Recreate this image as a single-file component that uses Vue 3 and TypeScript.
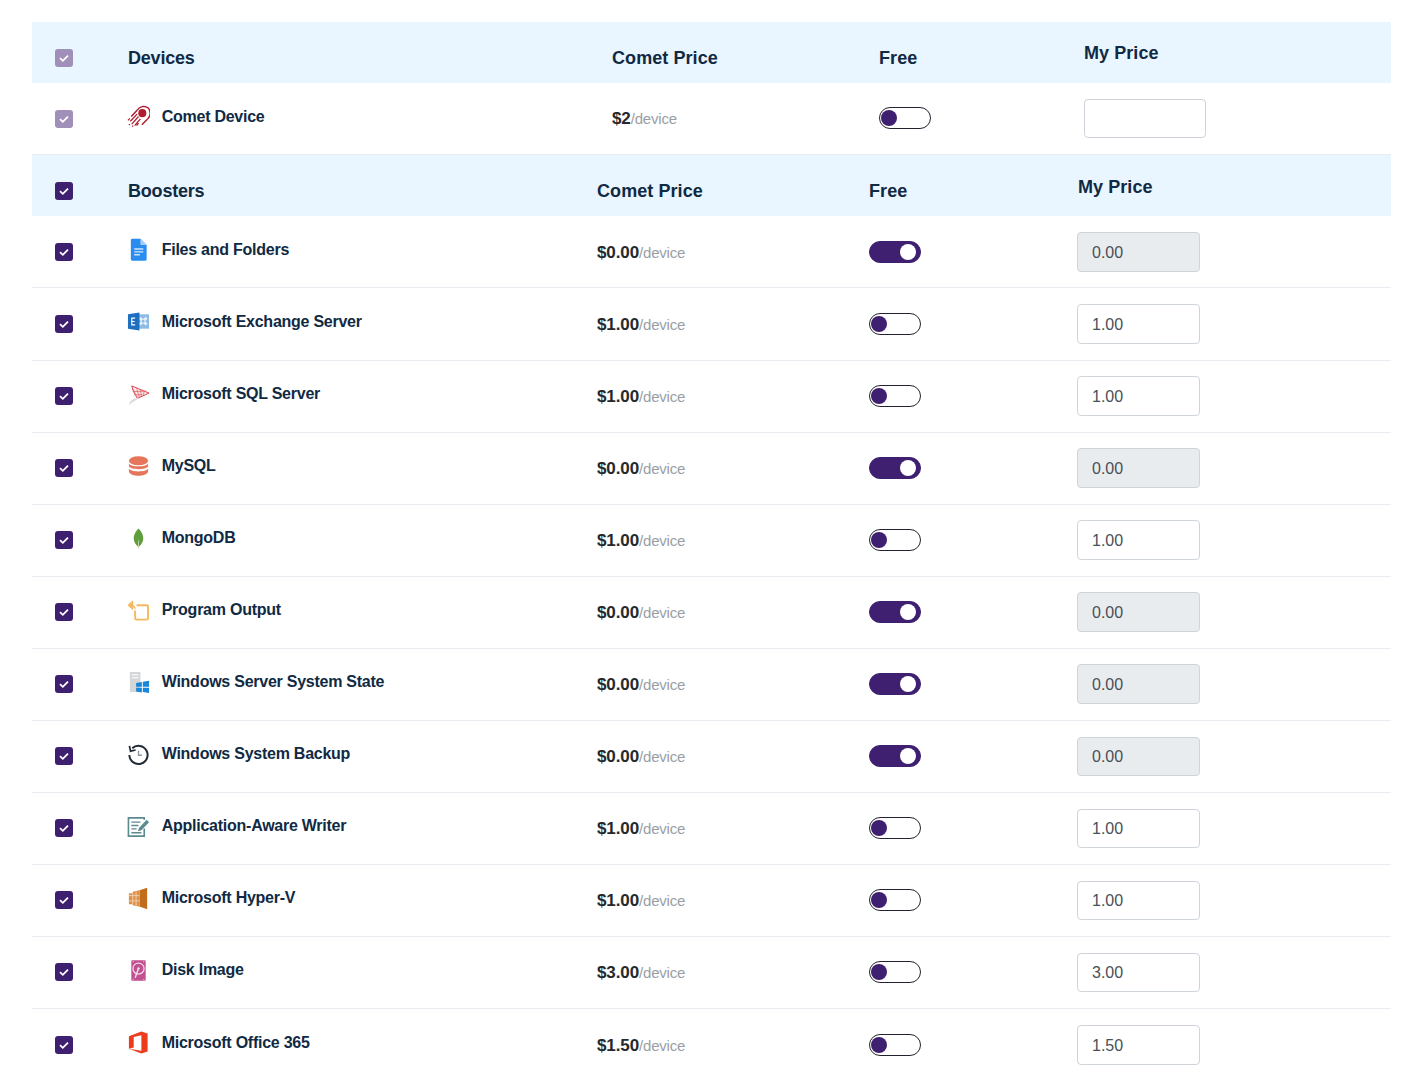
<script setup lang="ts">
interface Booster {
  name: string
  icon: string
  price: string
  free: boolean
}

const boosters: Booster[] = [
  { name: 'Files and Folders', icon: 'files', price: '0.00', free: true },
  { name: 'Microsoft Exchange Server', icon: 'exchange', price: '1.00', free: false },
  { name: 'Microsoft SQL Server', icon: 'sql', price: '1.00', free: false },
  { name: 'MySQL', icon: 'mysql', price: '0.00', free: true },
  { name: 'MongoDB', icon: 'mongo', price: '1.00', free: false },
  { name: 'Program Output', icon: 'output', price: '0.00', free: true },
  { name: 'Windows Server System State', icon: 'state', price: '0.00', free: true },
  { name: 'Windows System Backup', icon: 'backup', price: '0.00', free: true },
  { name: 'Application-Aware Writer', icon: 'writer', price: '1.00', free: false },
  { name: 'Microsoft Hyper-V', icon: 'hyperv', price: '1.00', free: false },
  { name: 'Disk Image', icon: 'disk', price: '3.00', free: false },
  { name: 'Microsoft Office 365', icon: 'office', price: '1.50', free: false },
]
</script>

<template>
  <main class="page">
    <section class="devices">
      <div class="row head">
        <span class="check dim"><svg viewBox="0 0 18 18"><path d="M5 9.2l2.8 2.6L13 6.6" /></svg></span>
        <span class="title first">Devices</span>
        <span class="title">Comet Price</span>
        <span class="title">Free</span>
        <span class="title up">My Price</span>
      </div>
      <div class="row item">
        <span class="check dim"><svg viewBox="0 0 18 18"><path d="M5 9.2l2.8 2.6L13 6.6" /></svg></span>
        <div class="name">
          <svg class="icon" viewBox="0 0 24 24">
            <circle cx="16" cy="8.500" r="4.200" fill="#b01c2e" />
            <path d="M10.500 5.500A8 8 0 0 1 22 3a8 8 0 0 1-.5 11.500" fill="none" stroke="#b01c2e" stroke-width="1.500" />
            <path d="M10.500 5.500L4.500 12M21.500 14.500L15.500 20.500" fill="none" stroke="#b01c2e" stroke-width="1.500" />
            <path d="M3 14L1 16M10.500 9.500L3.500 17M6 14.500L4.500 16M12 12L5 20M3 20L2 21M14 14.500L8 21.500M6.500 21.500L5.500 22.500M12 19L10 21.500" fill="none" stroke="#b01c2e" stroke-width="1.300" />
          </svg>
          <span>Comet Device</span>
        </div>
        <div class="cost"><b>$2</b><i>/device</i></div>
        <span class="toggle"><span class="knob" /></span>
        <input class="price" type="text" />
      </div>
    </section>

    <section class="boosters">
      <div class="row head">
        <span class="check"><svg viewBox="0 0 18 18"><path d="M5 9.2l2.8 2.6L13 6.6" /></svg></span>
        <span class="title first">Boosters</span>
        <span class="title">Comet Price</span>
        <span class="title">Free</span>
        <span class="title up">My Price</span>
      </div>
      <div v-for="b in boosters" :key="b.name" class="row item">
        <span class="check"><svg viewBox="0 0 18 18"><path d="M5 9.2l2.8 2.6L13 6.6" /></svg></span>
        <div class="name">
          <svg class="icon" viewBox="0 0 24 24">
            <g v-if="b.icon === 'files'">
              <path d="M4 2.200A1.500 1.500 0 0 1 5.500 .7H14l6.500 6.500v15a1.500 1.500 0 0 1-1.500 1.500H5.500A1.500 1.500 0 0 1 4 22.200z" fill="#2b8cf0" />
              <path d="M14 .7l6.500 6.500H14z" fill="#a4d0fa" />
              <path d="M7.500 11.500h9.500M7.500 14.500h9.500M7.500 17.500h6" stroke="#cfe5fb" stroke-width="1.400" />
            </g>
            <g v-else-if="b.icon === 'exchange'">
              <rect x="11" y="4.500" width="12" height="15" fill="#8dbbe6" />
              <path d="M14 7l2.800 2.500L19.500 7l2 2-2.500 2.700 2.500 2.600-2 2-2.700-2.500-2.800 2.500-1.800-2 2.500-2.600-2.500-2.700z" fill="#e6f0fa" />
              <circle cx="16.800" cy="11.700" r="1.500" fill="#8dbbe6" />
              <path d="M1 4.500L13 2.500v19L1 19.500z" fill="#1f6fc0" />
              <path d="M8.500 8.500H5v7h3.500M5 12h3" stroke="#fff" stroke-width="1.200" fill="none" />
            </g>
            <g v-else-if="b.icon === 'sql'">
              <path d="M5 3l18 7.500-12 5.500C8 12 6 8 5 3z" fill="#fbe6e7" stroke="#d9404a" stroke-width="1" />
              <path d="M6 6l5 10M10 5.500l3 9.500M14 7l1 6.500M18 8.500l-1 4M6 9l14-.5M8 12.500l8-.5" stroke="#de666e" stroke-width=".8" fill="none" />
              <path d="M11 15.500C6 16.500 2 19 2.500 23c3-3 6.500-4.500 9.500-7z" fill="#dcdcdc" />
            </g>
            <g v-else-if="b.icon === 'mysql'">
              <ellipse cx="12" cy="6" rx="10" ry="4.800" fill="#e5765c" />
              <path d="M2 8.800C4 12.800 20 12.800 22 8.800V11.800C20 15.800 4 15.800 2 11.800zM2 14.200C4 18.200 20 18.200 22 14.200v3.300C20 23 4 23 2 17.500z" fill="#e5765c" />
            </g>
            <g v-else-if="b.icon === 'mongo'">
              <path d="M12 1.500c3.500 3.500 5.300 7.500 5 11-.3 3.700-2.800 6.700-5 8.300-2.200-1.600-4.700-4.600-5-8.300-.3-3.500 1.500-7.500 5-11z" fill="#5f9e3c" />
              <path d="M12 14v8.500" stroke="#c9d8b8" stroke-width=".9" />
            </g>
            <g v-else-if="b.icon === 'output'" fill="none" stroke="#f4b85e" stroke-width="2">
              <path d="M10 6.500h10.500a1.500 1.500 0 0 1 1.500 1.500v12a1.500 1.500 0 0 1-1.500 1.500H10a1.500 1.500 0 0 1-1.500-1.500v-8" />
              <path d="M1 6.500L6 2v9zM5 6.500c2.500 0 3.500 1.500 3.500 4" fill="#f4b85e" stroke-width="1" />
            </g>
            <g v-else-if="b.icon === 'state'">
              <rect x="3" y="1" width="11" height="21" fill="#d4d6d8" />
              <path d="M5 4h7M5 7h7" stroke="#f4f4f4" stroke-width="1.500" />
              <path d="M9.500 12.500l6-1v5h-6zM16.500 11.300l6.500-1V16.500h-6.500zM9.500 17.500h6v5l-6-1zM16.500 17.500H23V23l-6.500-1z" fill="#1a86d8" />
            </g>
            <g v-else-if="b.icon === 'backup'" fill="none" stroke="#222b36" stroke-width="2.100">
              <path d="M5.500 5.500A9.500 9.500 0 1 1 2.500 12.500" />
              <path d="M2.500 3l1.200 5.500L9 7.300" stroke-width="1.800" />
              <path d="M12 8v4.800h3.500" stroke="#8a94a6" stroke-width="1.400" />
            </g>
            <g v-else-if="b.icon === 'writer'" fill="none" stroke="#5b8a8f" stroke-width="1.700">
              <path d="M18 14v8H1.500V3H18v2" />
              <path d="M4.500 7.500H14M4.500 11H12M4.500 14.500H10M4.500 18.500H15" stroke-width="1.400" />
              <path d="M11.500 17l1-3.500 8-8.500 2.500 2.500-8 8.500z" fill="#5b8a8f" stroke="none" />
            </g>
            <g v-else-if="b.icon === 'hyperv'">
              <path d="M13 3.500L21 .7v22.600l-8-3z" fill="#c26d1c" />
              <path d="M13 3.500L6 5v1.500H2V18h4v1l7 1.500z" fill="#dd9048" />
              <path d="M6 6.500V18M9.500 5v15M13 9H2M13 14.500H2" stroke="#f3cfac" stroke-width="1" />
            </g>
            <g v-else-if="b.icon === 'disk'">
              <rect x="4.500" y="1.200" width="15" height="21.500" rx="1" fill="#c0508f" />
              <circle cx="12" cy="10" r="5.800" fill="none" stroke="#f5dcec" stroke-width="1.300" />
              <path d="M12 10l-3.500 9.500" stroke="#f5dcec" stroke-width="1.500" />
              <circle cx="12" cy="10" r="1.300" fill="#f5dcec" />
              <path d="M6 2.800h1M17 2.800h1M6 21.200h1M17 21.200h1" stroke="#f5dcec" stroke-width="1" />
            </g>
            <g v-else-if="b.icon === 'office'">
              <path d="M2 5.500L15 .5l6.500 2v19l-6.500 2-13-5V5.500zM15 20.500V4.500L7 6.300v10.800l-5 1.400z" fill="#eb3c1e" fill-rule="evenodd" />
            </g>
          </svg>
          <span>{{ b.name }}</span>
        </div>
        <div class="cost"><b>${{ b.price }}</b><i>/device</i></div>
        <span class="toggle" :class="{ on: b.free }"><span class="knob" /></span>
        <input class="price" type="text" :value="b.price" :disabled="b.free" />
      </div>
    </section>
  </main>
</template>

<style scoped>
.page {
  margin: 22px 32px 0;
  font-family: "Liberation Sans", Arial, sans-serif;
  color: #102a43;
}
.row {
  display: grid;
  align-items: center;
}
.devices .row {
  grid-template-columns: 96px 484px 267px 205px 1fr;
}
.boosters .row {
  grid-template-columns: 96px 469px 272px 208px 1fr;
}
.head {
  height: 61px;
  background: #e9f5ff;
}
.boosters .head {
  height: 61.42px;
}
.item {
  height: 72px;
  box-sizing: border-box;
  border-bottom: 1px solid #e8ecf0;
}
.boosters .item {
  height: 72.05px;
}
.boosters .item:last-child {
  border-bottom: none;
}
.check {
  display: block;
  width: 18px;
  height: 18px;
  margin-left: 23px;
  border-radius: 3px;
  background: #3f1f6f;
}
.check.dim {
  background: #a08fb9;
}
.check svg {
  display: block;
  fill: none;
  stroke: #fff;
  stroke-width: 1.800;
}
.head .check {
  margin-top: 10px;
}
.head .title {
  margin-top: 10px;
}
.title {
  font-size: 18px;
  line-height: 24px;
  font-weight: 700;
  letter-spacing: 0.07px;
}
.title.first {
  letter-spacing: -0.2px;
}
.head .up {
  margin-top: 0;
}
.boosters .head .up {
  margin-top: 2px;
  margin-left: 1px;
}
.name {
  display: flex;
  align-items: center;
  gap: 11.7px;
  margin-bottom: 4px;
  font-size: 16px;
  font-weight: 700;
  letter-spacing: -0.25px;
}
.icon {
  width: 23px;
  height: 23px;
  flex: none;
  margin-left: -1px;
}
.cost {
  font-size: 15px;
  letter-spacing: -0.2px;
  margin-top: 2px;
}
.devices .cost {
  margin-top: 1px;
}
.cost b {
  font-size: 17px;
  letter-spacing: -0.1px;
  color: #26282b;
}
.cost i {
  font-style: normal;
  color: #9b9ea3;
}
.toggle {
  display: block;
  box-sizing: border-box;
  width: 52px;
  height: 22px;
  padding: 2px 1px;
  border: 1px solid #23232f;
  border-radius: 11px;
  background: #fff;
}
.devices .toggle {
  margin-top: -1px;
}
.knob {
  display: block;
  width: 16px;
  height: 16px;
  border-radius: 50%;
  background: #3f1f6f;
}
.toggle.on {
  background: #3f1f6f;
  border-color: #3f1f6f;
}
.toggle.on .knob {
  margin-left: 29px;
  background: #fff;
}
.price {
  display: block;
  box-sizing: border-box;
  width: 123px;
  height: 39.5px;
  padding: 2px 14px 0;
  border: 1px solid #ced4da;
  border-radius: 4px;
  background: #fff;
  color: #495057;
  font: 16px "Liberation Sans", Arial, sans-serif;
  outline: none;
}
.devices .price {
  width: 122px;
}
.price:disabled {
  background: #e9ecef;
}
</style>
